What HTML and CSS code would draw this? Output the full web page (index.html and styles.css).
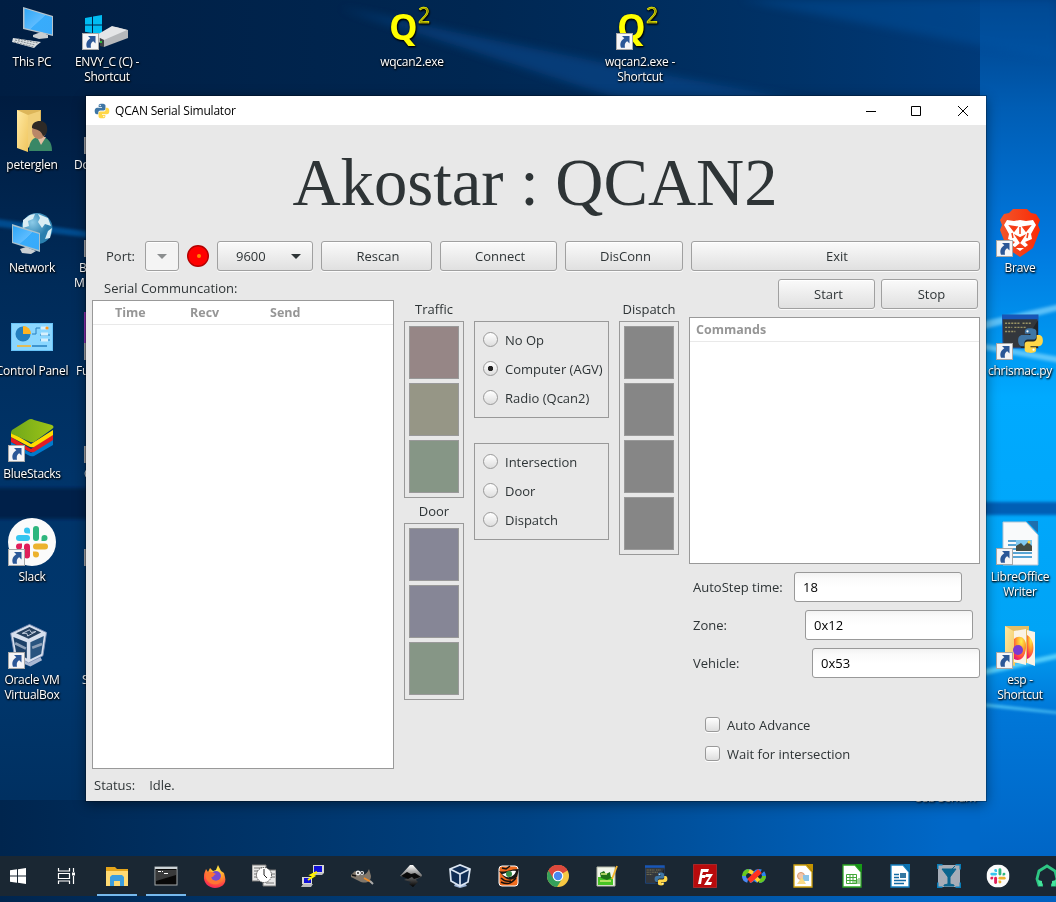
FILE: index.html
```html
<!DOCTYPE html>
<html lang="en">
<head>
<meta charset="utf-8">
<title>QCAN Serial Simulator</title>
<link rel="stylesheet" href="styles.css">
</head>
<body>
<svg class="defs" width="0" height="0" aria-hidden="true">
  <defs>
    <linearGradient id="screen" x1="0" y1="0" x2="1" y2="1"><stop offset="0" stop-color="#2fa6f5"/><stop offset=".5" stop-color="#5dbcff"/><stop offset=".51" stop-color="#38acfb"/><stop offset="1" stop-color="#39aafa"/></linearGradient>
    <linearGradient id="folder" x1="0" y1="0" x2="1" y2="1"><stop offset="0" stop-color="#ffe9a2"/><stop offset="1" stop-color="#f0c65f"/></linearGradient>
    <radialGradient id="globe" cx=".35" cy=".3"><stop offset="0" stop-color="#8ccbe8"/><stop offset="1" stop-color="#2a7fae"/></radialGradient>
    <radialGradient id="fire" cx=".6" cy=".2" r=".9"><stop offset="0" stop-color="#fff04a"/><stop offset=".45" stop-color="#ff9a2a"/><stop offset=".8" stop-color="#ff3b47"/><stop offset="1" stop-color="#e0167c"/></radialGradient>
    <linearGradient id="bs" x1="0" y1="0" x2="1" y2="0"><stop offset="0" stop-color="#6fa71b"/><stop offset="1" stop-color="#9dc416"/></linearGradient>
    <linearGradient id="ink" x1="0" y1="0" x2="0" y2="1"><stop offset="0" stop-color="#fff"/><stop offset=".6" stop-color="#555"/><stop offset="1" stop-color="#000"/></linearGradient>
    <linearGradient id="brave" x1="0" x2="1"><stop offset="0" stop-color="#f1562b"/><stop offset="1" stop-color="#fb2a05"/></linearGradient>
  </defs>
  <symbol id="python" viewBox="0 0 24 24">
    <path fill="#3f76a5" d="M11.8 1C7 1 7 2.9 7 3.8V6h5v1H4.800C2.300 7 1 9 1 12s1.300 5 3.400 5H6.500v-2.700c0-1.700 1.300-3.100 3.100-3.100h5c1.500 0 2.600-1.200 2.600-2.600V3.800C17.200 2 15 1 11.800 1Z"/>
    <path fill="#ffd748" d="M12.200 23c4.800 0 4.800-1.900 4.800-2.800V18h-5v-1h7.200c2.500 0 3.800-2 3.800-5s-1.300-5-3.400-5h-2.100v2.700c0 1.700-1.300 3.100-3.100 3.100h-5c-1.500 0-2.600 1.200-2.600 2.600v4.800C6.800 22 9 23 12.200 23Z"/>
    <circle cx="9.300" cy="3.800" r="1" fill="#fff"/><circle cx="14.700" cy="20.200" r="1" fill="#fff"/>
  </symbol>
  <symbol id="arrow" viewBox="0 0 17 17">
    <rect x=".5" y=".5" width="16" height="16" fill="#f5f5f7" stroke="#a8a8a8"/>
    <path fill="#2b5797" d="M6 3h7.500v7.500l-2.200-2.200C8.600 9.600 8.600 12 9 14.800H5C3.500 11 4.600 7.500 8.300 5.300Z"/>
  </symbol>
  <symbol id="slack" viewBox="0 0 48 48">
    <circle cx="24" cy="24" r="24" fill="#fbfbfb"/>
    <g fill="#36c5f0"><rect x="8" y="17" width="14" height="6" rx="3"/><path d="M22 15.500h-3a3 3 0 1 1 3-3Z"/></g>
    <g fill="#2eb67d"><rect x="25" y="8" width="6" height="15" rx="3"/><path d="M33.500 23v-3a3 3 0 1 1 3 3Z"/></g>
    <g fill="#ecb22e"><rect x="25" y="25.500" width="15" height="6" rx="3"/><path d="M25 33.500h3a3 3 0 1 1-3 3Z"/></g>
    <g fill="#e01e5a"><rect x="16" y="25.500" width="6" height="15" rx="3"/><path d="M14 25.500v3a3 3 0 1 1-3-3Z"/></g>
  </symbol>
  <symbol id="vbox" viewBox="0 0 48 48">
    <path d="M14 36l10 6 11-7 3 6-13 7-12-5Z" fill="#a9b8d3"/>
    <path d="M3 11 24 1l19 9-4 26-16 8L7 35Z" fill="#d7e0ee" stroke="#7d90b5"/>
    <path d="M9 11 24 4l13 6-14 7Z" fill="#26415f"/><path d="M6 15l15 6v18L9 32Z" fill="#1d4168"/><path d="M25 21l15-7-3 20-12 6Z" fill="#28547f"/>
    <path d="M16 11l8-4 2 3 5-1-9 5-1-3Z" fill="none" stroke="#d7e0ee"/>
    <path d="M8 22l12 6M27 27l11-4" stroke="#8da0b8" stroke-width="3"/>
  </symbol>
  <symbol id="term" viewBox="0 0 36 36">
    <path d="M0 1h35v32H1Z" fill="#33373c" stroke="#1b55a8"/><path d="M0 1h35v4H0Z" fill="#1756b8"/>
    <path d="M3 9h15m2 0h9M3 13h7m2 0h12M3 17h10" stroke="#9a9466" stroke-width="1.300" stroke-dasharray="2 1"/>
    <path d="M35 6 18 33h17Z" fill="#202429"/>
  </symbol>
</svg>

<svg class="wallpaper" viewBox="0 0 1056 902" preserveAspectRatio="none" aria-hidden="true">
  <defs>
    <linearGradient id="wtop"><stop offset="0" stop-color="#001e43"/><stop offset=".45" stop-color="#002752"/><stop offset=".75" stop-color="#003267"/><stop offset="1" stop-color="#003d80"/></linearGradient>
    <linearGradient id="wleft" x1="0" y1="0" x2="0" y2="1"><stop offset="0" stop-color="#001c40"/><stop offset=".25" stop-color="#002b59"/><stop offset=".5" stop-color="#003469"/><stop offset=".75" stop-color="#00376d"/><stop offset="1" stop-color="#002d5c"/></linearGradient>
    <linearGradient id="wright" x1="0" y1="0" x2="0" y2="1"><stop offset="0" stop-color="#003f84"/><stop offset=".12" stop-color="#005db4"/><stop offset=".27" stop-color="#0078de"/><stop offset=".37" stop-color="#0094ef"/><stop offset=".44" stop-color="#00aaff"/><stop offset=".7" stop-color="#00a4f6"/><stop offset=".79" stop-color="#0077d8"/><stop offset="1" stop-color="#0060c0"/></linearGradient>
    <linearGradient id="wbot"><stop offset="0" stop-color="#00254e"/><stop offset=".5" stop-color="#004384"/><stop offset=".9" stop-color="#0068c8"/><stop offset="1" stop-color="#0068c8"/></linearGradient>
    <filter id="soft"><feGaussianBlur stdDeviation="4"/></filter><filter id="soft2"><feGaussianBlur stdDeviation="1.500"/></filter>
  </defs>
  <rect width="1056" height="902" fill="url(#wtop)"/>
  <rect y="96" width="500" height="760" fill="url(#wleft)"/>
  <rect y="800" width="1056" height="102" fill="url(#wbot)"/>
  <rect x="980" width="76" height="902" fill="url(#wright)"/>
  <path d="M340 8 640 70 900 118 640 106Z" fill="#075099" opacity=".5" filter="url(#soft)"/>
  <path d="M740 0h316v60Z" fill="#005aad" opacity=".35" filter="url(#soft)"/>
  <path d="M-10 218 100 233v6L-10 226Z" fill="#005ba8" opacity=".7" filter="url(#soft2)"/>
  <rect x="-10" y="488" width="110" height="31" fill="#001d42" opacity=".8" filter="url(#soft2)"/>
  <g filter="url(#soft2)">
    <path d="M980 322l80-18v6l-80 20ZM980 343l80 14v6l-80-14Z" fill="#8cdcff" opacity=".65"/>
    <rect x="976" y="502" width="90" height="13" fill="#005eb5"/>
    <path d="M980 670l80-17v5l-80 18ZM980 703l80 9v2l-80-8Z" fill="#68dcff" opacity=".8"/>
  </g>
</svg>

<main class="desktop">
  <div class="shortcut at-pc"><svg class="pic" viewBox="0 0 48 48"><path d="M15 2l30 9v20L15 24Z" fill="#b7c3cb"/><path d="M16.500 3.500 44 12v17.500l-27.500-6.500Z" fill="url(#screen)"/><path d="M25 30l8-3 7 3v3l-9 1-6-2Z" fill="#c8cdd1"/><path d="M5 33l21 3 7 1-4 3-3 3-22-6Z" fill="#dde1e3"/><path d="M7 35l20 5M10 34l20 4M6 37l20 5" stroke="#80888d" stroke-dasharray="2 1"/></svg><span>This PC</span></div>
  <div class="shortcut at-envy"><svg class="pic" viewBox="0 0 48 48"><path d="M3 13l7-1.200v7.700H3Zm8-1.400 9-1.500v9.400h-9ZM3 20.500h7V28l-7-1.200Zm8 0h9v9.300l-9-1.500Z" fill="#00bcf2"/><path d="M17 31 34 22l12 3v8L22 42l-5-5Z" fill="#b6b8bb"/><path d="M13 31 30 21l15 4-23 10Z" fill="#e4e5e7"/><path d="M18 33l4 2v7l-4-1Z" fill="#3e4144"/><circle cx="19" cy="37" r="1" fill="#2ee23e"/><use href="#arrow" x="0" y="28" width="17" height="17"/></svg><span>ENVY_C (C) -<br>Shortcut</span></div>
  <div class="shortcut at-q1"><svg class="pic" viewBox="0 0 48 48"><text x="1" y="35" class="q">Q</text><text x="30" y="18" class="sup">2</text></svg><span>wqcan2.exe</span></div>
  <div class="shortcut at-q2"><svg class="pic" viewBox="0 0 48 48"><text x="1" y="35" class="q">Q</text><text x="30" y="18" class="sup">2</text><use href="#arrow" x="0" y="28" width="17" height="17"/></svg><span>wqcan2.exe -<br>Shortcut</span></div>
  <div class="shortcut at-peter"><svg class="pic" viewBox="0 0 48 48"><path d="M9 2h24v36H9Z" fill="#ddb65a"/><path d="M9 2l11 5v37L9 40Z" fill="url(#folder)"/><path d="M20 7l12-4v26L20 40Z" fill="#f0cf79"/><path d="M21 43c0-10 4-14 11-14 8 0 12 5 12 14Z" fill="#398766"/><path d="M29 29l4 8 5-8Z" fill="#e4bea2"/><ellipse cx="31" cy="23" rx="7" ry="8" fill="#b98768"/><path d="M24 20c-1-8 14-10 15-1 1 6-2 9-4 9-2-6-6-6-11-8Z" fill="#2e2a26"/></svg><span>peterglen</span></div>
  <div class="shortcut at-net"><svg class="pic" viewBox="0 0 48 48"><circle cx="29" cy="17.500" r="15.500" fill="url(#globe)"/><path d="M15 9l7-5 5-1-2 5-5 2 1 5-6 2ZM30 3l10 4 3 8-6-2-3 4-4-6 2-4ZM40 20l4-3-2 10-5 1Z" fill="#d9edf4"/><path d="M4 13l28 9v19L4 32Z" fill="#aac1cc"/><path d="M5 15l26 8v16L5 31Z" fill="url(#screen)"/><path d="M12 38l6-2 10 4-5 3-9-1Z" fill="#c9cfd3"/></svg><span>Network</span></div>
  <div class="shortcut at-cp"><svg class="pic" viewBox="0 0 48 48"><rect x="3" y="9" width="42" height="28" fill="#68c3f7"/><rect x="4" y="10" width="40" height="26" fill="#8bd7ff"/><circle cx="15" cy="20" r="7.500" fill="#247fbf"/><path d="M15 20v-8a8 8 0 0 1 8 8Z" fill="#ffb321"/><path d="M24 20h4v-6h4m0 7h10m-10 5h10" fill="none" stroke="#247fbf"/><path d="M33 14h7m-7 6h7m-7 6h7" stroke="#d8f0fc" stroke-width="3"/><circle cx="39" cy="14" r="1.600" fill="#ff9b22"/><path d="M9 32h14" stroke="#ffb321" stroke-width="1.500"/><path d="M24 32h15" stroke="#247fbf" stroke-width="1.500"/></svg><span>Control Panel</span></div>
  <div class="shortcut at-blue"><svg class="pic" viewBox="0 0 48 48"><path d="M3 25l20 11 22-14v6L26 39q-3 1-6-1L3 29Z" fill="#007acc"/><path d="M3 20l20 12 22-15v6L26 35q-3 1-6-1L3 25Z" fill="#e31c23"/><path d="M3 15l20 12 22-14v5L26 30q-3 1-6-1L3 20Z" fill="#ffdc00"/><path d="M20 3q3-2 6 0l18 5q3 2 0 4L26 25q-3 1-6-1L4 17q-2-1 0-4Z" fill="url(#bs)"/><use href="#arrow" x="0" y="28" width="17" height="17"/></svg><span>BlueStacks</span></div>
  <div class="shortcut at-slack"><svg class="pic" viewBox="0 0 48 48"><use href="#slack" width="48" height="48"/><use href="#arrow" x="0" y="31" width="17" height="17"/></svg><span>Slack</span></div>
  <div class="shortcut at-vm"><svg class="pic" viewBox="0 0 48 48"><use href="#vbox" width="43" height="48"/><use href="#arrow" x="0" y="31" width="17" height="17"/></svg><span>Oracle VM<br>VirtualBox</span></div>
  <div class="shortcut at-brave"><svg class="pic" viewBox="0 0 48 48"><path d="M13 4 17 0h14l4 4 5 1 4 6-2 5 2 5-7 18-7 5-6 4-6-4-7-5-7-18 2-5-2-5 4-6Z" fill="url(#brave)"/><path d="M11 11l7 1 6-1 6 1 7-1 3 5-5 9 1 5-7 3 3 3-8 6-8-6 3-3-7-3 1-5-5-9Z" fill="#fff"/><path d="M14 17l7 1-3 4Zm20 0-7 1 3 4ZM20 27l4 2 4-2-4 6ZM16 24l1 5M32 24l-1 5M24 18v7M19 39l5-4 5 4" fill="#f63c16" stroke="#f63c16" stroke-width="1.500"/><use href="#arrow" y="31" width="17" height="17"/></svg><span>Brave</span></div>
  <div class="shortcut at-chris"><svg class="pic" viewBox="0 0 48 48"><use href="#term" x="6" y="2" width="37" height="37"/><use href="#python" x="21" y="15" width="27" height="27"/><use href="#arrow" y="31" width="17" height="17"/></svg><span>chrismac.py</span></div>
  <div class="shortcut at-writer"><svg class="pic" viewBox="0 0 48 48"><path d="M7 2h23l12 13v30H7Z" fill="#f9fafb" stroke="#b6c5d5"/><path d="M31 1h11v12Z" fill="#1e6fae"/><path d="M12 21h8m-8 4h8m-8 4h8m-8 4h24m-24 4h24" stroke="#2389c7" stroke-width="1.500"/><rect x="20" y="20" width="16" height="11" fill="#80c9f0"/><path d="M20 31v-5l5-3 3 3 4-4 4 4v5Z" fill="#444c42"/><circle cx="33" cy="22" r="1.500" fill="#ffd33c"/><use href="#arrow" y="28" width="17" height="17"/></svg><span>LibreOffice<br>Writer</span></div>
  <div class="shortcut at-esp"><svg class="pic" viewBox="0 0 48 48"><path d="M9 3h24v37H9Z" fill="#e5be65"/><path d="M9 3l10 6v34L9 40Z" fill="url(#folder)"/><path d="M18 8l12-2v36l-12-3ZM31 7l8 2v34l-8-3Z" fill="#faf3e5"/><path d="M18 16c5-5 13-2 12 9-1 10-6 14-12 11Z" fill="url(#fire)"/><path d="M31 12c8 4 9 21 0 24Z" fill="url(#fire)"/><circle cx="22" cy="27" r="5" fill="#7b3ad2"/><use href="#arrow" y="29" width="17" height="17"/></svg><span>esp -<br>Shortcut</span></div>

  <span class="peek p1">Do</span><span class="peek p2">B</span><span class="peek p3">M</span><span class="peek p4">Fu</span><span class="peek p5">C</span><span class="peek p6">S</span><span class="peek p7">Usb Serium</span>
  <i class="edge e1"></i><i class="edge e2"></i><i class="edge e3 purple"></i><i class="edge e4"></i><i class="edge e5"></i><i class="edge e6"></i>

  <section class="window">
    <header class="titlebar">
      <svg class="logo"><use href="#python"/></svg><span class="caption">QCAN Serial Simulator</span>
      <svg class="controls" viewBox="0 0 104 12"><path d="M1 6.500h10M46.500 1.500h9v9h-9ZM93 1l10 10M103 1 93 11" fill="none" stroke="#000"/></svg>
    </header>
    <h1>Akostar : QCAN2</h1>
    <div class="toolbar">
      <span class="port">Port:</span>
      <span class="btn combo-empty"><i class="caret"></i></span>
      <svg class="led" viewBox="0 0 22 22"><circle cx="11" cy="11" r="10.300" fill="red" stroke="#b50000" stroke-width="1.400"/><circle cx="12" cy="11" r="2" fill="#ff8c00"/></svg>
      <span class="btn baud">9600<i class="caret"></i></span>
      <span class="btn rescan">Rescan</span><span class="btn connect">Connect</span><span class="btn disconn">DisConn</span><span class="btn exit">Exit</span>
    </div>
    <div class="content">
      <div class="serial">
        <div class="serial-label">Serial Communcation:</div>
        <div class="list"><div class="list-head"><b class="c1">Time</b><b class="c2">Recv</b><b>Send</b></div></div>
      </div>
      <div class="lamps">
        <div class="lamp-label">Traffic</div>
        <div class="frame"><i class="red"></i><i class="amber"></i><i class="green"></i></div>
        <div class="lamp-label second">Door</div>
        <div class="frame"><i class="blue"></i><i class="blue"></i><i class="green"></i></div>
      </div>
      <div class="radios">
        <div class="group"><label><i class="radio"></i>No Op</label><label><i class="radio on"></i>Computer (AGV)</label><label><i class="radio"></i>Radio (Qcan2)</label></div>
        <div class="group"><label><i class="radio"></i>Intersection</label><label><i class="radio"></i>Door</label><label><i class="radio"></i>Dispatch</label></div>
      </div>
      <div class="lamps">
        <div class="lamp-label">Dispatch</div>
        <div class="frame"><i></i><i></i><i></i><i></i></div>
      </div>
      <div class="right">
        <div class="run"><span class="btn">Start</span><span class="btn">Stop</span></div>
        <div class="list commands"><div class="list-head"><b>Commands</b></div></div>
        <div class="field"><span class="auto">AutoStep time:</span><span class="entry">18</span></div>
        <div class="field"><span class="zone">Zone:</span><span class="entry">0x12</span></div>
        <div class="field"><span class="vehicle">Vehicle:</span><span class="entry">0x53</span></div>
        <div class="checks"><label><i class="check"></i>Auto Advance</label><label><i class="check"></i>Wait for intersection</label></div>
      </div>
    </div>
    <footer class="status"><span>Status:</span><span>Idle.</span></footer>
  </section>
</main>

<nav class="taskbar">
  <span class="start"><svg viewBox="0 0 24 24"><path d="M4 6.300 11 5.300v6.200H4Zm8-1.100 8-1.200v7.500h-8ZM4 12.500h7v6.200l-7-1Zm8 0h8V20l-8-1.200Z" fill="#fff"/></svg></span>
  <span class="views"><svg viewBox="0 0 24 24"><path d="M4.500 4v3h11V4M4.500 20v-3h11v3M4.500 9.500h11v5h-11ZM19.500 4v4m0 4v8" fill="none" stroke="#fff" stroke-width="1.200"/><path d="M18 8.500h3v3h-3Z" fill="#fff"/></svg></span>
  <span class="open"><svg viewBox="0 0 24 24"><path d="M1 3h9l2 2h11v17H1Z" fill="#e5a51b"/><path d="M1 7h22v15H1Z" fill="#ffda73"/><path d="M5 22v-9l2-2h10l2 2v9h-4v-5H9v5Z" fill="#3c9ddd"/></svg></span>
  <span class="open"><svg viewBox="0 0 24 24"><rect x="1" y="3" width="22" height="18" fill="#080808" stroke="#a6abad"/><path d="M1 3h22v2H1Z" fill="#ccd3d7"/><path d="M2 6h20v5L2 17Z" fill="#393a3b"/><path d="M4 7.500h3m1 0h1m1 2h4" stroke="#fff"/></svg></span>
  <span><svg viewBox="0 0 24 24"><path d="M3 5l2 3 2-4 3 3 3-1 2-5 3 6 3 2 1 4c2 7-4 11-10 11S0 19 1 12c0-3 1-4 2-7Z" fill="url(#fire)"/><circle cx="13" cy="12" r="5" fill="#764bd0"/><path d="M3 9c5-3 8 0 10 1-3 1-2 4-6 3 1 4 9 6 11 0 2 7-6 9-11 6-4-3-5-6-4-10Z" fill="#ff7533"/></svg></span>
  <span><svg viewBox="0 0 24 24"><path d="M0 1h14v16H0ZM11 6h13v16H11Z" fill="#e7e7e7" stroke="#777"/><path d="M2 4h10M2 7h9M2 10h9M2 13h9m3 6h8M18 10h5m-5 3h5" stroke="#777"/><circle cx="12" cy="11" r="7.500" fill="#fff" stroke="#333" stroke-dasharray="1 1"/><path d="M12 5v6l3 3" fill="none" stroke="#222"/></svg></span>
  <span><svg viewBox="0 0 24 24"><path d="M12 1h11v8H12ZM1 13h10v7H1Z" fill="#d7d7d4"/><path d="M13 2h8v6h-8ZM3 14h7v5H3Z" fill="#1111d8"/><path d="M11 9h12l-2 2h-9ZM2 20h10l-2 3H0Z" fill="#bbb"/><path d="M16 8 10 11l3 1-6 4" fill="none" stroke="#fff000" stroke-width="2"/></svg></span>
  <span><svg viewBox="0 0 24 24"><path d="M1 11 5 7l4 3c5 2 8 0 10-5l2 7c0 7-7 8-12 5L1 13Z" fill="#81776b"/><circle cx="8" cy="9" r="2.400" fill="#eee"/><circle cx="12" cy="9" r="2" fill="#eee"/><path d="M8 8v2m4-2v2M2 11l4 1" stroke="#111" stroke-width="1.300"/><path d="M14 14l7 4" stroke="#f28c25" stroke-width="1.700"/><path d="M20 17l3 3" stroke="#aaa" stroke-width="2"/></svg></span>
  <span><svg viewBox="0 0 24 24"><path d="M1 12 11 1h3l9 10c0 3-5 3-6 5l2 2-5 5-4-3 2-2-7-2 4-2Z" fill="url(#ink)"/><path d="M2 12 8 8l4 2 4-1 6 4-7 2-2-2-4 2Z" fill="#090909"/></svg></span>
  <span><svg viewBox="0 0 24 24"><path d="M8 18h8l3 4-7 2-6-2Z" fill="#9eb4d6"/><path d="M2 5 12 1l10 4-2 13-8 4-9-5Z" fill="#102d55" stroke="#dce6f3" stroke-width="1.700"/><path d="M2 5l10 5 10-5M12 10v12" fill="none" stroke="#dce6f3" stroke-width="1.700"/></svg></span>
  <span><svg viewBox="0 0 24 24"><rect x="2" y="2" width="19" height="20" rx="3" fill="#ef6b1e" stroke="#fff"/><path d="M2 7c6 2 11-2 20-2l-2 8c-7 5-11 2-14-1Z" fill="#1a1715"/><path d="M5 10c4 0 8-4 14-3-2 7-10 8-14 3Z" fill="#fff"/><circle cx="12" cy="10" r="3" fill="#348b44"/><path d="M5 4l4 1 4-3M4 18c6 3 10 2 15-4M4 14c3 3 6 4 10 3" fill="none" stroke="#17110d" stroke-width="1.500"/></svg></span>
  <span><svg viewBox="0 0 24 24"><circle cx="12" cy="12" r="11" fill="#f7c843"/><path d="M12 12 2.500 6.500a11 11 0 0 1 19 0Z" fill="#dc493d"/><path d="M12 12 2.500 6.500A11 11 0 0 0 11 23l5-8Z" fill="#35a05b"/><path d="M12 7h9.700a11 11 0 0 0-19.200-.5L7 14Z" fill="#dc493d"/><circle cx="12" cy="12" r="5.300" fill="#fff"/><circle cx="12" cy="12" r="4.200" fill="#4a88ef"/></svg></span>
  <span><svg viewBox="0 0 24 24"><path d="M2 3h18v19H2Z" fill="#f1f5e9" stroke="#b4b8a9"/><path d="M3 13h15v8H3Z" fill="#47c323"/><path d="M5 9l4-2 2 3 4-2 1 6-4 2-6-2Z" fill="#1d7115"/><path d="M6 10h6M5 17h11" stroke="#d5ed78" stroke-width="1.500"/><path d="M22 2l-5 13" stroke="#f2b32b" stroke-width="1.800"/></svg></span>
  <span><svg viewBox="0 0 24 24"><use href="#term" x="1" y="1" width="20" height="20"/><use href="#python" x="10" y="8" width="14" height="14"/></svg></span>
  <span><svg viewBox="0 0 24 24"><path d="M.500.500h23v23H.500Z" fill="#b80b0d" stroke="#e53935" stroke-dasharray="1 1"/><path d="M5 20 8 5h8l-1 3h-5l-1 3h4l-1 3H9l-1 6Z" fill="#fff"/><path d="M13 10h7l-5 8h4l-1 3h-7l5-8h-4Z" fill="#fff"/></svg></span>
  <span><svg viewBox="0 0 24 24"><g fill="none" stroke-width="4"><circle cx="7" cy="12" r="5" stroke="#4a89f5" stroke-dasharray="7 2"/><circle cx="17" cy="12" r="5" stroke="#2d83ef" stroke-dasharray="7 2"/><path d="M2 12a5 5 0 0 1 5-5M17 17a5 5 0 0 0 5-5" stroke="#67c91e"/><path d="M7 7l4 2M14 14l3 3" stroke="#ffd12a"/><path d="M7 17 18 7" stroke="#ff311f" stroke-width="5.500"/></g></svg></span>
  <span><svg viewBox="0 0 24 24"><path d="M3 1h12l6 7v15H3Z" fill="#fff" stroke="#d0a10d" stroke-width="1.300"/><path d="M15 0h7v8Z" fill="#c49300"/><circle cx="10" cy="12" r="3.500" fill="#f3c7ab" stroke="#d89a72"/><path d="M12 11h6v6h-6Z" fill="#8bc4e7"/><path d="M6 20l5-7 4 7Z" fill="#f8d985"/></svg></span>
  <span><svg viewBox="0 0 24 24"><path d="M3 1h12l6 7v15H3Z" fill="#fff" stroke="#2da625" stroke-width="1.300"/><path d="M15 0h7v8Z" fill="#169b16"/><path d="M6.500 10.500h10v9h-10Zm0 3h10m-10 3h10M10 10v9m3-9v9M15 20v-3m2 3v-5m2 5v-6" fill="none" stroke="#43a639"/></svg></span>
  <span><svg viewBox="0 0 24 24"><path d="M3 1h12l6 7v15H3Z" fill="#fff" stroke="#1683c4" stroke-width="1.300"/><path d="M15 0h7v8Z" fill="#0b73b3"/><path d="M6 10.500h5m-5 3h5m-5 3h12m-12 3h10" stroke="#126aa4" stroke-width="1.300"/><path d="M12 9h6v5h-6Z" fill="#3478a2"/></svg></span>
  <span><svg viewBox="0 0 24 24"><rect x="1" y="1" width="22" height="22" fill="#a6adb8"/><path d="M.500 5V.500h5m13 0h5v5m0 13v5h-5m-13 0h-5v-5" fill="none" stroke="#087db8" stroke-width="2"/><path d="M5 5h14l-6 8v7l4 1v1H7v-1l4-1v-7ZM15 5l3-3" fill="#0b658e" stroke="#0b658e"/></svg></span>
  <span><svg viewBox="0 0 24 24"><use href="#slack" x=".500" y=".500" width="23" height="23"/></svg></span>
  <span><svg viewBox="0 0 24 24"><path d="M8 21H4l-2-6 2-8 8-5 8 5 2 8-2 6h-4" fill="none" stroke="#2ec784" stroke-width="2.800"/><path d="M3 16l4 1v5H4ZM21 16l-4 1v5h3Z" fill="#43e39b"/></svg></span>
</nav>
</body>
</html>
```

FILE: styles.css
```css
* { box-sizing: border-box; }
body { margin: 0; width: 1056px; height: 902px; overflow: hidden; position: relative; background: #000; font: 13px/18px "Open Sans", "Noto Sans", sans-serif; color: #2e3436; }
i { font-style: normal; display: block; }
svg { display: block; }
.defs { position: absolute; }
.wallpaper { position: absolute; inset: 0; width: 1056px; height: 902px; }
.desktop { position: relative; height: 856px; overflow: hidden; }

.shortcut { position: absolute; width: 88px; display: flex; flex-direction: column; align-items: center; color: #fff; font-size: 12px; line-height: 15px; letter-spacing: -.25px; text-align: center; white-space: nowrap; text-shadow: 1px 1px 2px #000, 0 1px 2px #000; }
.pic { width: 48px; height: 48px; margin-bottom: 1px; }
.q { font: bold 36px "Open Sans", sans-serif; fill: #ff0; }
.sup { font: 21px "Open Sans", sans-serif; fill: #ff0; stroke: #ff0; stroke-width: .5px; }
.at-pc { left: -12px; top: 5px; }
.at-envy { left: 63px; top: 5px; }
.at-envy .pic { margin-left: -2px; }
.at-q1 { left: 368px; top: 5px; }
.at-q2 { left: 596px; top: 5px; }
.at-peter { left: -12px; top: 108px; }
.at-net { left: -12px; top: 211px; }
.at-cp { left: -12px; top: 314px; }
.at-blue { left: -12px; top: 417px; }
.at-slack { left: -12px; top: 518px; }
.at-slack .pic, .at-vm .pic { margin-bottom: 3px; }
.at-vm { left: -12px; top: 621px; }
.at-brave { left: 976px; top: 209px; }
.at-brave .pic, .at-chris .pic { margin-bottom: 3px; }
.at-chris { left: 976px; top: 312px; }
.at-writer { left: 976px; top: 520px; }
.at-esp { left: 976px; top: 623px; }
.peek { position: absolute; color: #fff; font-size: 12px; line-height: 15px; letter-spacing: -.25px; text-shadow: 1px 1px 2px #000; }
.p1 { left: 74px; top: 157px; }
.p2 { left: 79px; top: 260px; }
.p3 { left: 74px; top: 275px; }
.p4 { left: 76px; top: 363px; }
.p5 { left: 84px; top: 466px; }
.p6 { left: 82px; top: 672px; }
.p7 { left: 914px; top: 790px; }
.edge { position: absolute; left: 84px; width: 2px; height: 17px; background: #a3a6ab; }
.e1 { top: 137px; } .e2 { top: 240px; } .e3 { top: 312px; height: 31px; } .e4 { top: 343px; } .e5 { top: 446px; } .e6 { top: 549px; }
.purple { background: #8e34b5; }

.window { position: absolute; left: 86px; top: 96px; width: 900px; height: 705px; background: #e8e8e8; box-shadow: 0 0 0 1px rgba(0,0,0,.25), 0 3px 12px rgba(0,0,0,.45); display: flex; flex-direction: column; }
.titlebar { height: 30px; background: #fff; display: flex; align-items: center; padding: 0 17px 0 8px; color: #000; font-size: 12px; letter-spacing: -.2px; }
.logo { width: 16px; height: 16px; margin-right: 5px; }
.controls { width: 104px; height: 12px; margin-left: auto; }
h1 { margin: 0; height: 116px; font: 66.67px/116px "Liberation Serif", serif; text-align: center; color: #2e3436; padding-right: 2px; }
.toolbar { height: 30px; display: flex; align-items: center; padding: 0 6px 0 20px; gap: 8px; }
.port { width: 31px; }
.btn { height: 30px; border: 1px solid #a0a0a0; border-radius: 3px; background: linear-gradient(#fafafa, #e0e0e0); box-shadow: inset 0 1px #fff, 0 1px rgba(255,255,255,.8); display: flex; align-items: center; justify-content: center; }
.caret { width: 0; height: 0; border: 5px solid transparent; border-top-color: #2e3436; border-bottom: 0; }
.combo-empty { width: 34px; background: #f4f4f4; }
.combo-empty .caret { border-top-color: #8b8e8f; }
.led { width: 22px; height: 22px; }
.baud { width: 96px; justify-content: space-between; padding: 0 11px 0 18px; }
.rescan { width: 111px; padding-left: 3px; }
.connect { width: 117px; padding-left: 3px; }
.disconn { width: 118px; padding-left: 3px; }
.exit { flex: 1; padding-left: 3px; }
.content { height: 502px; padding: 0 6px; display: grid; grid-template-columns: 302px 60px 135px 60px 291px; column-gap: 10px; }
.serial-label { height: 29px; padding: 8px 0 0 12px; }
.list { background: #fff; border: 1px solid #999; }
.serial .list { height: 469px; }
.list-head { height: 24px; border-bottom: 1px solid #e9e9e9; display: flex; align-items: center; color: #969696; padding-left: 22px; padding-top: 1px; font-size: 12.500px; }
.c1 { width: 75px; } .c2 { width: 80px; }
.lamps { display: flex; flex-direction: column; }
.lamp-label { height: 50px; padding-top: 29px; text-align: center; }
.lamp-label.second { height: 25px; padding-top: 4px; }
.frame { border: 1px solid #999; padding: 4px; display: grid; gap: 4px; }
.frame i { height: 53px; border: 1px solid #999; background: #868686; }
.frame .red { background: #968686; }
.frame .amber { background: #969686; }
.frame .green { background: #869686; }
.frame .blue { background: #868696; }
.radios { padding-top: 50px; display: flex; flex-direction: column; gap: 25px; }
.group { height: 97px; border: 1px solid #999; padding: 3px 8px; }
label { height: 29px; display: flex; align-items: center; gap: 7px; white-space: nowrap; }
.radio { width: 15px; height: 15px; border: 1px solid #999; border-radius: 50%; background: linear-gradient(#fff, #dedede); flex: none; }
.on { background: radial-gradient(circle, #222 0 2.400px, transparent 3px), linear-gradient(#fff, #dedede); }
.run { display: flex; gap: 6px; padding: 8px 2px 8px 89px; }
.run .btn { width: 97px; padding-left: 4px; }
.commands { height: 247px; margin-bottom: 8px; }
.commands .list-head { padding-left: 6px; }
.field { height: 30px; margin-bottom: 8px; display: flex; align-items: center; padding-left: 4px; }
.entry { width: 168px; height: 30px; border: 1px solid #999; border-radius: 3px; background: linear-gradient(#f2f2f2, #fafafa 5px, #fff 15px); color: #000; padding: 5px 8px; }
.auto { width: 101px; } .zone { width: 112px; } .vehicle { width: 119px; }
.checks { padding: 24px 0 0 16px; }
.check { width: 15px; height: 15px; border: 1px solid #999; border-radius: 3px; background: linear-gradient(#fff, #dedede); box-shadow: 0 1px #fff; }
.status { display: flex; gap: 14px; padding: 7px 8px; }

.taskbar { position: relative; height: 40px; background: #1a2733; display: flex; overflow: hidden; }
.taskbar span { flex: 0 0 48.950px; height: 40px; display: flex; align-items: center; justify-content: center; }
.taskbar svg { width: 24px; height: 24px; }
.taskbar .start { flex-basis: 36px; }
.taskbar .views { flex-basis: 57px; padding-left: 3px; }
.taskbar .open { background: linear-gradient(#76b9ed, #76b9ed) center bottom / 40px 2px no-repeat; }
```
